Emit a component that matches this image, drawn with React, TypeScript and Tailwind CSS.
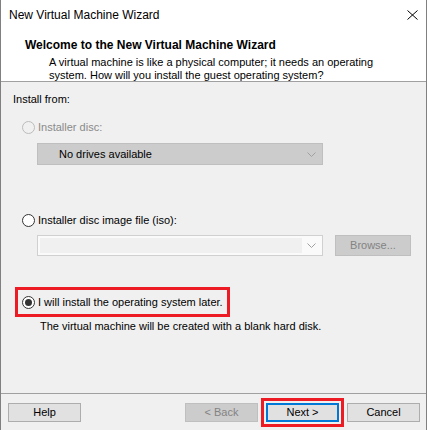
const font = { fontFamily: '"Liberation Sans", Arial, sans-serif' };

function Radio({ checked = false, disabled = false }: { checked?: boolean; disabled?: boolean }) {
  return (
    <span
      className={`flex h-[13px] w-[13px] shrink-0 items-center justify-center rounded-full border ${
        disabled ? "border-[#bcbcbc] bg-[#f0f0f0]" : "border-[#333333] bg-white"
      }`}
    >
      {checked && <span className="h-[7px] w-[7px] rounded-full bg-[#333333]" />}
    </span>
  );
}

function Chevron() {
  return (
    <svg width="9" height="5" viewBox="0 0 9 5" className="shrink-0">
      <path d="M0.5 0.5 L4.5 4.5 L8.5 0.5" fill="none" stroke="#a0a0a0" strokeWidth="1" />
    </svg>
  );
}

function Button({ label, disabled = false, focused = false }: { label: string; disabled?: boolean; focused?: boolean }) {
  return (
    <div
      className={`flex h-[19px] w-[73px] items-center justify-center text-[11px] ${
        focused
          ? "border-2 border-[#0078d7] bg-[#e1e1e1] text-black"
          : disabled
          ? "border border-[#bfbfbf] bg-[#cccccc] text-[#838383]"
          : "border border-[#adadad] bg-[#e1e1e1] text-black"
      }`}
    >
      {label}
    </div>
  );
}

export default function App() {
  return (
    <div className="h-[430px] w-[428px] bg-white" style={font}>
      <div className="flex h-[430px] w-[427px] flex-col border-x border-[#808080] bg-[#f0f0f0] text-[11px] leading-[13px] text-black">
        {/* Title bar */}
        <div className="flex h-[30px] shrink-0 items-center justify-between bg-white pl-[8px] pr-[8px]">
          <span className="text-[12px]">New Virtual Machine Wizard</span>
          <svg width="11" height="10" viewBox="0 0 11 10">
            <path d="M0.5 0.5 L10.5 9.5 M10.5 0.5 L0.5 9.5" stroke="#000" strokeWidth="1" />
          </svg>
        </div>

        {/* Header */}
        <div className="h-[52px] shrink-0 border-b border-[#a0a0a0] bg-white pl-[24px] pt-[8px]">
          <div className="text-[12px] font-bold leading-[14px]">Welcome to the New Virtual Machine Wizard</div>
          <div className="pl-[24px] pt-[4px] leading-[13px]">
            <div>A virtual machine is like a physical computer; it needs an operating</div>
            <div>system. How will you install the guest operating system?</div>
          </div>
        </div>

        {/* Body */}
        <div className="flex flex-1 flex-col pl-[12px] pt-[11px]">
          <div className="leading-[13px]">Install from:</div>

          <div className="ml-[9px] mt-[15px] flex items-center gap-[3px] text-[#8a8a8a]">
            <Radio disabled />
            <span>Installer disc:</span>
          </div>

          <div className="ml-[24px] mt-[9px] flex h-[22px] w-[286px] items-center justify-between border border-[#bfbfbf] bg-[#cccccc] pl-[21px] pr-[6px]">
            <span>No drives available</span>
            <Chevron />
          </div>

          <div className="ml-[9px] mt-[49px] flex items-center gap-[3px]">
            <Radio />
            <span>Installer disc image file (iso):</span>
          </div>

          <div className="ml-[24px] mt-[8px] flex items-center gap-[12px]">
            <div className="flex h-[21px] w-[286px] items-center justify-between border border-[#d0d0d0] bg-[#fafafa] pl-[2px] pr-[6px]">
              <div className="h-[15px] w-[262px] bg-[#f0f0f0]" />
              <Chevron />
            </div>
            <div className="flex h-[21px] w-[76px] items-center justify-center border border-[#bfbfbf] bg-[#cccccc] text-[#838383]">
              Browse...
            </div>
          </div>

          <div className="ml-[2px] mt-[31px] flex h-[30px] w-[215px] items-center gap-[3px] border-[3px] border-[#ed1c24] pl-[4px]">
            <Radio checked />
            <span>I will install the operating system later.</span>
          </div>

          <div className="ml-[27px] mt-[3px]">The virtual machine will be created with a blank hard disk.</div>
        </div>

        {/* Footer */}
        <div className="flex h-[37px] shrink-0 items-start border-t border-[#a0a0a0] pl-[7px] pr-[6px] pt-[9px]">
          <Button label="Help" />
          <div className="flex-1" />
          <div className="flex gap-[8px]">
            <Button label="< Back" disabled />
            <div className="relative">
              <Button label="Next >" focused />
              <div className="absolute -inset-[5px] border-[3px] border-[#ed1c24]" />
            </div>
            <Button label="Cancel" />
          </div>
        </div>
      </div>
    </div>
  );
}
